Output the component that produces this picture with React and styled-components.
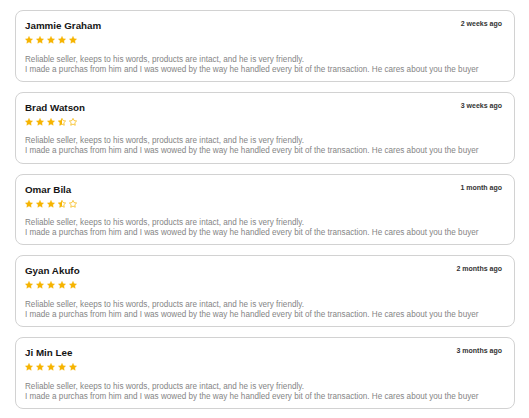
import React from "react";
import styled, { createGlobalStyle } from "styled-components";

const Global = createGlobalStyle`
  html, body { margin: 0; padding: 0; background: #ffffff; }
  body { font-family: "Liberation Sans", Arial, sans-serif; }
`;

const List = styled.div`
  display: flex;
  flex-direction: column;
  gap: 10px;
  padding: 10px 14px 0 15px;
`;

const Card = styled.div`
  border: 1px solid #d2d2d2;
  border-radius: 8px;
  padding: 9px 12px 6.25px 9px;
  background: #fff;
`;

const Header = styled.div`
  display: flex;
  justify-content: space-between;
  align-items: flex-start;
`;

const Name = styled.div`
  font-size: 9.8px;
  font-weight: 700;
  color: #151515;
`;

const Time = styled.div`
  font-size: 7px;
  font-weight: 700;
  color: #333;
`;

const Stars = styled.div`
  display: flex;
  gap: 3px;
  margin-top: 5px;
  height: 8px;
`;

const Body = styled.p`
  margin: 10.5px 0 0;
  font-size: 8.15px;
  color: #858585;
  line-height: 10px;
`;

const STAR = "M12 2l3.09 6.26L22 9.27l-5 4.87 1.18 6.88L12 17.77l-6.18 3.25L7 14.14 2 9.27l6.91-1.01L12 2z";
const GOLD = "#f6b400";

function Star({ kind, id }) {
  return (
    <svg width="8" height="8" viewBox="1 1 22 22">
      {kind === "half" && (
        <defs>
          <linearGradient id={id}>
            <stop offset="50%" stopColor={GOLD} />
            <stop offset="50%" stopColor="#fff" />
          </linearGradient>
        </defs>
      )}
      <path
        d={STAR}
        fill={kind === "full" ? GOLD : kind === "half" ? `url(#${id})` : "none"}
        stroke={GOLD}
        strokeWidth={kind === "full" ? 1 : 2}
        strokeLinejoin="round"
      />
    </svg>
  );
}

function Rating({ value, uid }) {
  const items = [];
  for (let i = 1; i <= 5; i++) {
    const kind = value >= i ? "full" : value >= i - 0.5 ? "half" : "empty";
    items.push(<Star key={i} kind={kind} id={`${uid}-h${i}`} />);
  }
  return <Stars>{items}</Stars>;
}

const reviews = [
  { name: "Jammie Graham", time: "2 weeks ago", rating: 5 },
  { name: "Brad Watson", time: "3 weeks ago", rating: 3.5 },
  { name: "Omar Bila", time: "1 month ago", rating: 3.5 },
  { name: "Gyan Akufo", time: "2 months ago", rating: 5 },
  { name: "Ji Min Lee", time: "3 months ago", rating: 5 },
];

export default function App() {
  return (
    <>
      <Global />
      <List>
        {reviews.map((r, i) => (
          <Card key={i}>
            <Header>
              <Name>{r.name}</Name>
              <Time>{r.time}</Time>
            </Header>
            <Rating value={r.rating} uid={`r${i}`} />
            <Body>
              Reliable seller, keeps to his words, products are intact, and he is very friendly.
              <br />
              I made a purchas from him and I was wowed by the way he handled every bit of the transaction. He cares about you the buyer
            </Body>
          </Card>
        ))}
      </List>
    </>
  );
}
